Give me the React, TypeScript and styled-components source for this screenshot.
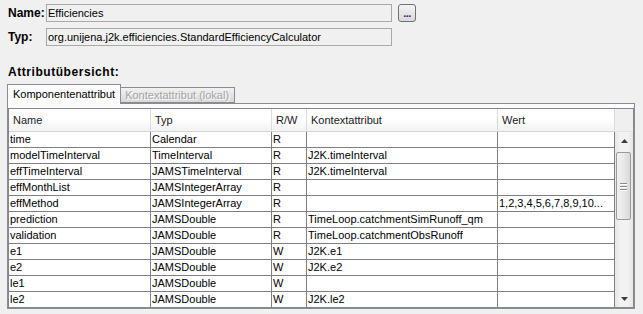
import React from "react";
import styled, { createGlobalStyle } from "styled-components";

const GlobalStyle = createGlobalStyle`
  html, body {
    margin: 0;
    padding: 0;
    background: #f0f0f0;
  }
  body {
    font-family: "Liberation Sans", Arial, sans-serif;
    font-size: 11px;
    color: #000;
  }
`;

type Row = {
  name: string;
  type: string;
  rw: string;
  context: string;
  value: string;
};

const rows: Row[] = [
  { name: "time", type: "Calendar", rw: "R", context: "", value: "" },
  { name: "modelTimeInterval", type: "TimeInterval", rw: "R", context: "J2K.timeInterval", value: "" },
  { name: "effTimeInterval", type: "JAMSTimeInterval", rw: "R", context: "J2K.timeInterval", value: "" },
  { name: "effMonthList", type: "JAMSIntegerArray", rw: "R", context: "", value: "" },
  { name: "effMethod", type: "JAMSIntegerArray", rw: "R", context: "", value: "1,2,3,4,5,6,7,8,9,10..." },
  { name: "prediction", type: "JAMSDouble", rw: "R", context: "TimeLoop.catchmentSimRunoff_qm", value: "" },
  { name: "validation", type: "JAMSDouble", rw: "R", context: "TimeLoop.catchmentObsRunoff", value: "" },
  { name: "e1", type: "JAMSDouble", rw: "W", context: "J2K.e1", value: "" },
  { name: "e2", type: "JAMSDouble", rw: "W", context: "J2K.e2", value: "" },
  { name: "le1", type: "JAMSDouble", rw: "W", context: "", value: "" },
  { name: "le2", type: "JAMSDouble", rw: "W", context: "J2K.le2", value: "" },
];

const columns = "142px 121px 35px 191px 117px";

const Page = styled.div`
  height: 314px;
  padding: 4px 9px 0 7px;
  box-sizing: border-box;
  overflow: hidden;
`;

const FormRow = styled.div`
  display: flex;
  align-items: center;
  height: 18px;
  margin-bottom: 6px;
`;

const Label = styled.div`
  width: 38px;
  padding-left: 1px;
  font-weight: bold;
  font-size: 12px;
`;

const Field = styled.div`
  width: 346px;
  height: 18px;
  box-sizing: border-box;
  border: 1px solid #a9a9a9;
  background: #f0f0f0;
  padding: 0 1px;
  line-height: 16px;
  white-space: nowrap;
  overflow: hidden;
`;

const DotsButton = styled.button`
  margin-left: 6px;
  width: 18px;
  height: 18px;
  padding: 0;
  border: 1px solid #707070;
  border-radius: 3px;
  background: linear-gradient(#f4f4f4, #e6e6e6 50%, #d9d9d9);
  font-family: "Liberation Sans", Arial, sans-serif;
  font-size: 11px;
  font-weight: bold;
  line-height: 12px;
  color: #3a1c70;
  letter-spacing: -0.5px;
`;

const Title = styled.div`
  margin-top: 19px;
  margin-bottom: 5px;
  padding-left: 1px;
  font-weight: bold;
  font-size: 12px;
  letter-spacing: 0.55px;
  line-height: 14px;
`;

const TabBar = styled.div`
  display: flex;
  align-items: flex-end;
  height: 19px;
`;

const Tab = styled.div<{ $active?: boolean }>`
  box-sizing: border-box;
  height: ${(p) => (p.$active ? "20px" : "16px")};
  padding: ${(p) => (p.$active ? "1px 5px 0 5px" : "0 5px 0 4px")};
  border: 1px solid #898c95;
  border-bottom: ${(p) => (p.$active ? "none" : "1px solid #898c95")};
  border-left: ${(p) => (p.$active ? "1px solid #898c95" : "none")};
  background: ${(p) => (p.$active ? "#fcfcfc" : "linear-gradient(#f2f2f2, #e4e4e4 50%, #d8d8d8)")};
  color: ${(p) => (p.$active ? "#000" : "#a3a3a3")};
  text-shadow: ${(p) => (p.$active ? "none" : "1px 1px 0 #ffffff")};
  line-height: ${(p) => (p.$active ? "16px" : "14px")};
  white-space: nowrap;
  position: relative;
  margin-bottom: ${(p) => (p.$active ? "-1px" : "0")};
  z-index: ${(p) => (p.$active ? 1 : 0)};
`;

const Panel = styled.div`
  border: 1px solid #898c95;
  background: #fcfcfc;
  padding-top: 4px;
  width: 628px;
  box-sizing: border-box;
`;

const ScrollPane = styled.div`
  border: 1px solid #828790;
  height: 200px;
  box-sizing: border-box;
  display: flex;
  flex-direction: column;
  background: #ffffff;
`;

const HeaderRow = styled.div`
  display: flex;
  height: 23px;
  flex-shrink: 0;
`;

const HeaderCells = styled.div`
  display: grid;
  grid-template-columns: ${columns};
  border-bottom: 1px solid #d5d5d5;
  background: linear-gradient(#ffffff, #ffffff 45%, #f1f2f4);
  box-sizing: border-box;
`;

const HeaderCell = styled.div`
  border-right: 1px solid #dcdcdc;
  padding-left: 4px;
  line-height: 22px;
  color: #1a1a1a;
  white-space: nowrap;
`;

const Corner = styled.div`
  flex: 1;
  background: #efefef;
  border-bottom: 1px solid #e2e2e2;
`;

const BodyArea = styled.div`
  display: flex;
  flex: 1;
  min-height: 0;
`;

const Body = styled.div`
  width: 606px;
  overflow: hidden;
`;

const DataRow = styled.div`
  display: grid;
  grid-template-columns: ${columns};
  height: 16px;
`;

const Cell = styled.div`
  border-right: 1px solid #808080;
  border-bottom: 1px solid #808080;
  padding-left: 1px;
  line-height: 15px;
  white-space: nowrap;
  overflow: hidden;
`;

const ScrollBar = styled.div`
  width: 18px;
  display: flex;
  flex-direction: column;
  background: linear-gradient(90deg, #e6e6e6, #f2f2f2 30%, #f2f2f2 70%, #e6e6e6);
`;

const Arrow = styled.div`
  height: 17px;
  display: flex;
  align-items: center;
  justify-content: center;
  flex-shrink: 0;
`;

const Track = styled.div`
  flex: 1;
  padding-top: 3px;
`;

const Thumb = styled.div`
  margin: 0 2px 0 1px;
  height: 68px;
  box-sizing: border-box;
  border: 1px solid #9b9b9b;
  border-radius: 2px;
  background: linear-gradient(90deg, #f1f1f1, #e9e9e9 50%, #d8d8d8);
  display: flex;
  flex-direction: column;
  align-items: center;
  justify-content: center;
  gap: 2px;
`;

const Grip = styled.div`
  width: 7px;
  height: 1px;
  background: #8a8a8a;
  box-shadow: 0 1px 0 #ffffff;
`;

const ArrowIcon = ({ up }: { up?: boolean }) => (
  <svg width="7" height="4" viewBox="0 0 7 4">
    <path d={up ? "M0 4 L3.5 0 L7 4 Z" : "M0 0 L3.5 4 L7 0 Z"} fill="#3c3c3c" />
  </svg>
);

const App = () => {
  return (
    <Page>
      <GlobalStyle />
      <FormRow>
        <Label>Name:</Label>
        <Field>Efficiencies</Field>
        <DotsButton>...</DotsButton>
      </FormRow>
      <FormRow>
        <Label>Typ:</Label>
        <Field>org.unijena.j2k.efficiencies.StandardEfficiencyCalculator</Field>
      </FormRow>
      <Title>Attributübersicht:</Title>
      <TabBar>
        <Tab $active>Komponentenattribut</Tab>
        <Tab>Kontextattribut (lokal)</Tab>
      </TabBar>
      <Panel>
        <ScrollPane>
          <HeaderRow>
            <HeaderCells>
              <HeaderCell>Name</HeaderCell>
              <HeaderCell>Typ</HeaderCell>
              <HeaderCell>R/W</HeaderCell>
              <HeaderCell>Kontextattribut</HeaderCell>
              <HeaderCell>Wert</HeaderCell>
            </HeaderCells>
            <Corner />
          </HeaderRow>
          <BodyArea>
            <Body>
              {rows.map((r, i) => (
                <DataRow key={i}>
                  <Cell>{r.name}</Cell>
                  <Cell>{r.type}</Cell>
                  <Cell>{r.rw}</Cell>
                  <Cell>{r.context}</Cell>
                  <Cell>{r.value}</Cell>
                </DataRow>
              ))}
            </Body>
            <ScrollBar>
              <Arrow>
                <ArrowIcon up />
              </Arrow>
              <Track>
                <Thumb>
                  <Grip />
                  <Grip />
                  <Grip />
                </Thumb>
              </Track>
              <Arrow>
                <ArrowIcon />
              </Arrow>
            </ScrollBar>
          </BodyArea>
        </ScrollPane>
      </Panel>
    </Page>
  );
};

export default App;
